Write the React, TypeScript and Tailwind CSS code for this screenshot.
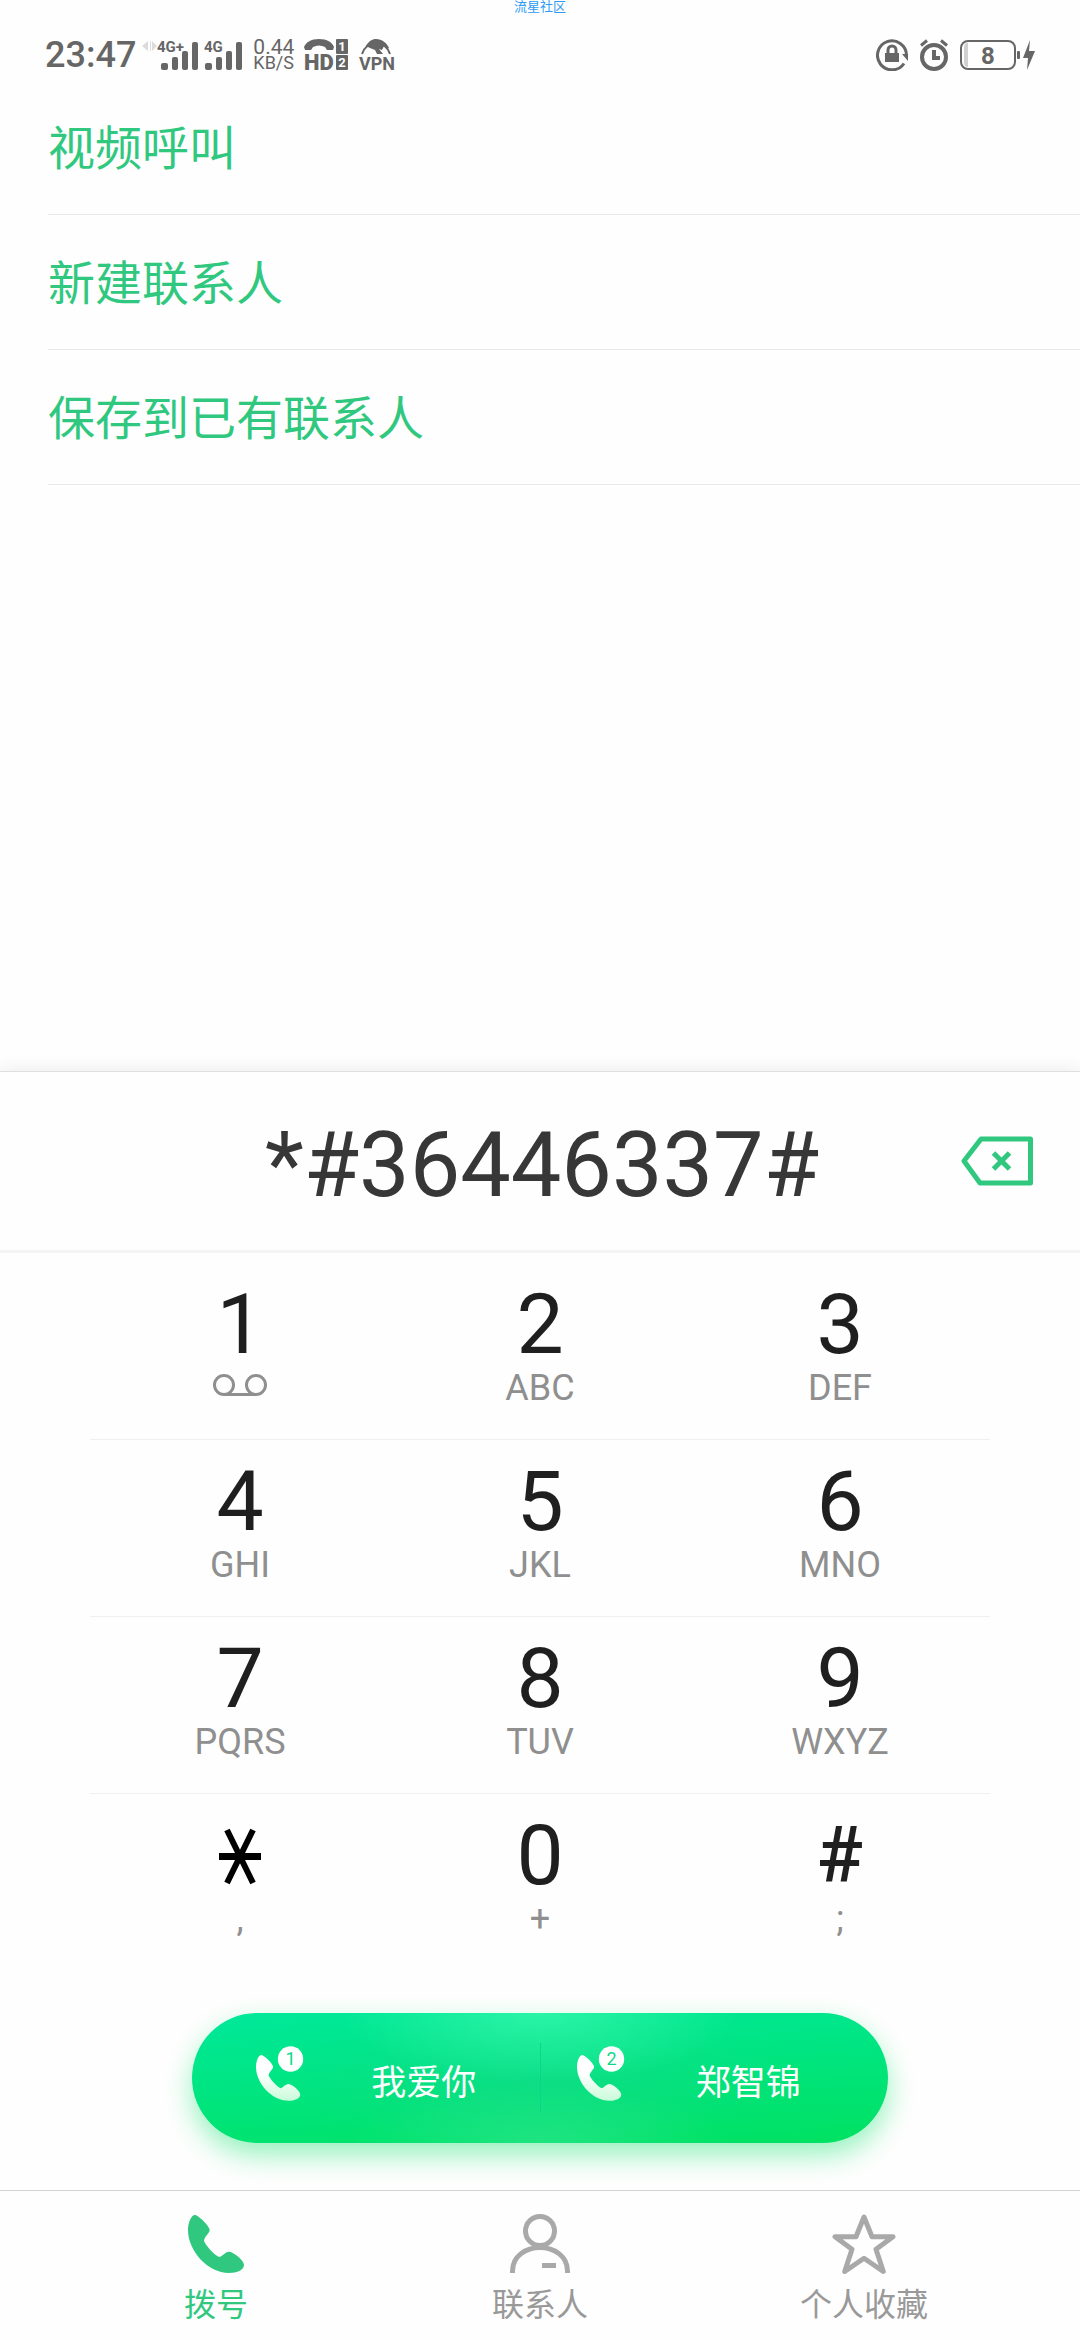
import React, { useState } from 'react';

const HANDSET =
    'M7 0C10 0 21.7 11 21.7 15C21.7 18 16 22 16 26C18 31 26 39.5 31 42C34 42 37 36.7 41 36.7C45 36.7 56 45 56 50C56 55 49 58 41 58C20 58 0 36 0 15C0 8 3 0 7 0Z';

const ACTIONS = ['视频呼叫', '新建联系人', '保存到已有联系人'];

const KEY_ROWS = [
    [['1', ''], ['2', 'ABC'], ['3', 'DEF']],
    [['4', 'GHI'], ['5', 'JKL'], ['6', 'MNO']],
    [['7', 'PQRS'], ['8', 'TUV'], ['9', 'WXYZ']],
    [['*', ','], ['0', '+'], ['#', ';']],
];

// Status bar icons
const SignalBars = ({ x }: { x: number }) => (
    <g>
        <rect x={x} y="25" width="7" height="7" rx="2" />
        <rect x={x + 11} y="19" width="6" height="13" rx="2" />
        <rect x={x + 21} y="13" width="6" height="19" rx="2" />
        <rect x={x + 31} y="4" width="6" height="28" rx="2" />
    </g>
);

const SignalMain = () => (
    <svg width="56" height="34" viewBox="0 0 56 34" fill="currentColor" className="overflow-visible" aria-label="4G+">
        <path d="M6 3v10L0 8zM8 3v10h1V3zM10 3l5 5-5 5z" fill="#dcdcdc" />
        <text x="15" y="14" fontSize="15" fontWeight="700">4G+</text>
        <SignalBars x={19} />
    </svg>
);

const SignalSecond = () => (
    <svg width="39" height="34" viewBox="0 0 39 34" fill="currentColor" className="overflow-visible" aria-label="4G">
        <text x="0" y="14" fontSize="15" fontWeight="700">4G</text>
        <SignalBars x={1} />
    </svg>
);

const HdIcon = () => (
    <svg width="44" height="34" viewBox="0 0 44 34" fill="currentColor" className="overflow-visible" aria-label="HD">
        <path d="M0 9C2 4 7 1 15 1s13 3 15 8l-1 3h-6l-2-3c-4-2-8-2-12 0l-2 3H1z" />
        <text x="0" y="32" fontSize="22" fontWeight="900">HD</text>
        <rect x="32" y="1" width="12" height="15" rx="1" />
        <rect x="32" y="17" width="12" height="15" rx="1" />
        <text x="38" y="13" fontSize="13" fontWeight="700" textAnchor="middle" fill="#fff">1</text>
        <text x="38" y="29" fontSize="13" fontWeight="700" textAnchor="middle" fill="#fff">2</text>
    </svg>
);

const VpnIcon = () => (
    <svg width="38" height="36" viewBox="0 0 38 36" fill="currentColor" className="overflow-visible" aria-label="VPN">
        <path d="M4 17A14.500 14.500 0 0 1 32 17" fill="none" stroke="currentColor" strokeWidth="2" />
        <path d="M7 10C11 4 14 2 18 2c6 0 11 4 13 9l-2 1-3-3-2 4-3-1 4 5h-6l-2-4-5-2-4-2z" />
        <text x="19" y="33" fontSize="18" fontWeight="700" textAnchor="middle">VPN</text>
    </svg>
);

const LockRotateIcon = () => (
    <svg width="32" height="32" viewBox="0 0 32 32" fill="none" stroke="currentColor" strokeWidth="3">
        <path d="M30.500 16A14.500 14.500 0 1 0 28 24.500" />
        <path d="M26 15h6v7z" fill="currentColor" stroke="none" />
        <rect x="9" y="14" width="14" height="9" fill="currentColor" stroke="none" />
        <path d="M12 15v-4a4 4 0 0 1 8 0v4" />
    </svg>
);

const AlarmIcon = () => (
    <svg width="28" height="32" viewBox="0 0 28 32" fill="none" stroke="currentColor">
        <circle cx="14" cy="18" r="12" strokeWidth="4" />
        <path d="M14 11v8h6" strokeWidth="4" />
        <path d="M1 6.500L7 1.500M27 6.500L21 1.500" strokeWidth="3" />
    </svg>
);

const BatteryIcon = () => (
    <svg width="75" height="32" viewBox="0 0 75 32" fill="currentColor" aria-label="8%">
        <rect x="1" y="2" width="54" height="28" rx="7" fill="none" stroke="currentColor" strokeWidth="2" />
        <path d="M8 4v24c-3 0-4-2-4-4V9c0-3 1-5 4-5z" fill="#d0d0d0" />
        <text x="28" y="25" fontSize="24" fontWeight="700" textAnchor="middle">8</text>
        <rect x="57" y="12" width="3" height="8" rx="1" />
        <path d="M70 1L63 19h5l-1 12 8-19h-6z" />
    </svg>
);

const SimIcon = ({ sim }: { sim: string }) => (
    <svg width="48" height="56" viewBox="0 0 48 56" className="shrink-0">
        <defs>
            <linearGradient id={`sim${sim}`} x1="0" y1="0" x2="0" y2="1">
                <stop offset="0.4" stopColor="#fff" />
                <stop offset="1" stopColor="#c8fbd9" />
            </linearGradient>
        </defs>
        <path d={HANDSET} transform="translate(0 9) scale(.79)" fill={`url(#sim${sim})`} />
        <circle cx="34.500" cy="13" r="12.700" fill="#fff" />
        <text x="34.500" y="19" fontSize="18" textAnchor="middle" fill="#0fd88b">{sim}</text>
    </svg>
);

const KeySymbol = ({ symbol }: { symbol: string }) => {
    if (symbol === '*') {
        return (
            <svg width="42" height="72" viewBox="0 0 42 72" stroke="#000">
                <path d="M0 36.500h42" strokeWidth="7" />
                <path d="M8 10l26 53M34 10L8 63" strokeWidth="6" />
            </svg>
        );
    }
    return (
        <span className={symbol === '#' ? 'text-[77px] leading-[72px] font-medium' : 'text-[84px] leading-[72px]'}>
            {symbol}
        </span>
    );
};

export default function App() {
    const [number, setNumber] = useState('*#36446337#');
    const [tab, setTab] = useState('拨号');

    const tabs = [
        {
            name: '拨号',
            icon: <path d={HANDSET} transform="translate(4 1)" fill="currentColor" />,
        },
        {
            name: '联系人',
            icon: (
                <g fill="none" stroke="currentColor" strokeWidth="5">
                    <circle cx="32" cy="17" r="14.500" />
                    <path d="M4.500 59v-2C4.500 42 18 33.500 32 33.500S59.500 42 59.500 57v2M34 51.500h14" />
                </g>
            ),
        },
        {
            name: '个人收藏',
            icon: (
                <path
                    d="M32 3L40 22.700H61L44 35.300L51.300 57.500L32 44.300L12.700 57.500L20 35.300L3 22.700H24Z"
                    fill="none" stroke="currentColor" strokeWidth="5" strokeLinejoin="round"
                />
            ),
        },
    ];

    return (
        <div className="flex min-h-screen flex-col bg-[#fefefe] font-['Roboto','Noto_Sans_CJK_SC',sans-serif]">
            {/* Status bar */}
            <header className="text-[#666]">
                <p className="h-[14px] text-center text-[13px] leading-[14px] text-[#2f9bf5]">流星社区</p>
                <div className="mt-4 flex h-[50px] items-center justify-between px-[45px]">
                    <div className="flex items-center gap-[10px]">
                        <div className="flex items-center gap-[6px]">
                            <time className="text-[36px] leading-[50px] font-medium">23:47</time>
                            <SignalMain />
                            <SignalSecond />
                        </div>
                        <div className="text-[18px] leading-[16px]">
                            <div className="text-[21px]">0.44</div>
                            <div>KB/S</div>
                        </div>
                        <HdIcon />
                        <VpnIcon />
                    </div>
                    <div className="flex items-center gap-3">
                        <LockRotateIcon />
                        <AlarmIcon />
                        <BatteryIcon />
                    </div>
                </div>
            </header>

            {/* Actions for the typed number */}
            <ul className="flex-1 pl-12">
                {ACTIONS.map(action => (
                    <li key={action} className="border-b border-[#e9e9e9]">
                        <button className="h-[134px] w-full pt-1 text-left text-[47px] text-[#30c87f]">{action}</button>
                    </li>
                ))}
            </ul>

            {/* Dial pad */}
            <main className="border-t border-[#dfdfdf] bg-[#fefefe] shadow-[0_-4px_14px_rgba(0,0,0,0.06)]">
                <div className="grid grid-cols-[74px_1fr_74px] items-center border-b-3 border-[#f4f4f4] px-[46px]">
                    <input
                        aria-label="电话号码"
                        className="col-start-2 h-[178px] w-full bg-transparent pt-2 pl-1 text-center text-[90px] text-[#373737] outline-none"
                        value={number}
                        onChange={e => setNumber(e.target.value)}
                    />
                    <button aria-label="删除" onClick={() => setNumber(n => n.slice(0, -1))}>
                        <svg width="74" height="50" viewBox="0 0 74 50" fill="none" stroke="#30c87f" strokeWidth="5" strokeLinejoin="round">
                            <path d="M21 3H70.500V47H20L4 25Z" />
                            <path d="M33.500 17l16 16M49.500 17l-16 16" />
                        </svg>
                    </button>
                </div>

                <div className="mx-[90px] pt-[10px]">
                    {KEY_ROWS.map((row, i) => (
                        <div key={i} className="grid h-[177px] grid-cols-3 border-b border-[#f0f0f0] last:border-0">
                            {row.map(([symbol, letters]) => (
                                <button
                                    key={symbol}
                                    aria-label={symbol}
                                    className="flex flex-col items-center gap-[7px] pt-[26px] text-[#1f1f1f]"
                                    onClick={() => setNumber(n => n + symbol)}
                                >
                                    <KeySymbol symbol={symbol} />
                                    {letters ? (
                                        <span className="text-[36px] leading-[40px] text-[#8f8f8f]">{letters}</span>
                                    ) : (
                                        <svg width="54" height="40" viewBox="0 0 54 40" fill="none" stroke="#8f8f8f" strokeWidth="3">
                                            <circle cx="11" cy="17" r="9.500" />
                                            <circle cx="43" cy="17" r="9.500" />
                                            <path d="M11 26.500h32" />
                                        </svg>
                                    )}
                                </button>
                            ))}
                        </div>
                    ))}
                </div>

                {/* Dual SIM call button */}
                <div className="flex justify-center pt-[42px] pb-[47px]">
                    <div className="grid h-[130px] w-[696px] grid-cols-[1fr_1px_1fr] items-center rounded-full bg-[radial-gradient(ellipse_200px_70px_at_50%_0%,rgba(60,250,175,0.7),transparent),radial-gradient(ellipse_190px_60px_at_50%_100%,rgba(60,230,150,0.5),transparent),radial-gradient(ellipse_260px_70px_at_50%_50%,rgba(30,212,145,0.4),transparent),linear-gradient(176deg,#00e89b,#00e161)] text-[35px] text-white shadow-[0_12px_28px_rgba(0,226,100,0.42)]">
                        <button className="flex h-full items-center pl-16">
                            <div className="pb-2"><SimIcon sim="1" /></div>
                            <span className="flex-1 pt-3 pl-1 text-center">我爱你</span>
                        </button>
                        <div className="h-[70px] bg-[#0cd587]" />
                        <button className="flex h-full items-center pr-4 pl-9">
                            <div className="pb-2"><SimIcon sim="2" /></div>
                            <span className="flex-1 pt-3 text-center">郑智锦</span>
                        </button>
                    </div>
                </div>
            </main>

            <nav className="grid h-[150px] grid-cols-3 border-t border-[#d3d3d3] bg-[#fefefe] px-[5%]">
                {tabs.map(({ name, icon }) => (
                    <button
                        key={name}
                        onClick={() => setTab(name)}
                        className={`flex flex-col items-center gap-2 pt-[23px] ${tab === name ? 'text-[#30c87f]' : 'text-[#a9a9a9]'}`}
                    >
                        <svg width="64" height="60" viewBox="0 0 64 60">{icon}</svg>
                        <span className={`text-[32px] leading-[46px] ${tab === name ? '' : 'text-[#999]'}`}>{name}</span>
                    </button>
                ))}
            </nav>
        </div>
    );
}
